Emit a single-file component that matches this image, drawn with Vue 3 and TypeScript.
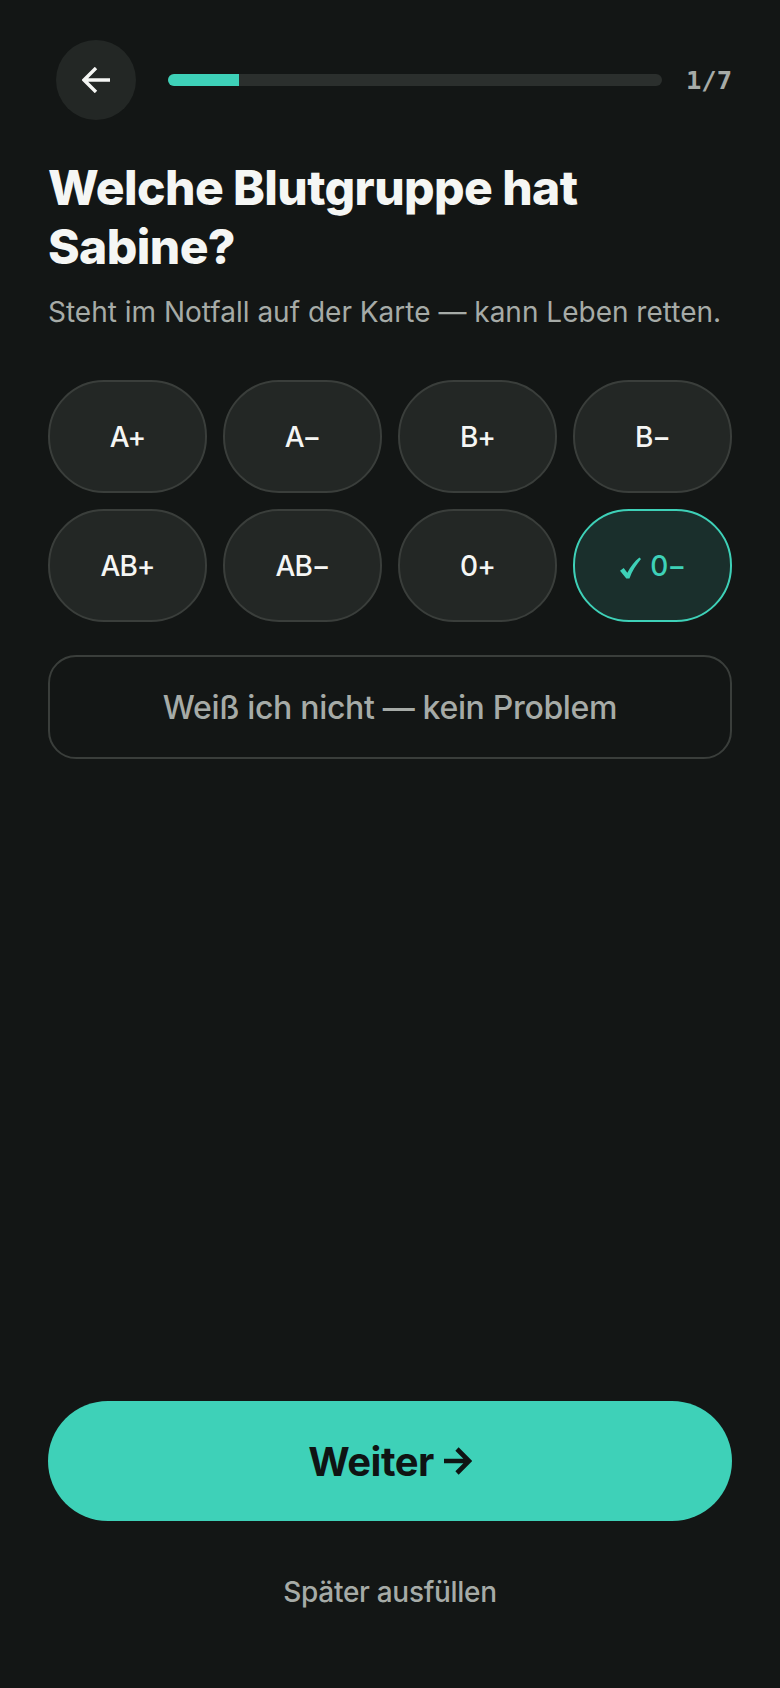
<script setup lang="ts">
import { ref } from "vue";

const groups = ["A+", "A−", "B+", "B−", "AB+", "AB−", "0+", "0−"];
const selected = ref("0−");
const step = 1;
const total = 7;
</script>

<template>
  <main class="screen">
    <header class="top">
      <button class="back" type="button" aria-label="Zurück">
        <svg width="28" height="26" viewBox="0 0 28 26" fill="none">
          <path d="M28 13H2M14 1 2 13l12 12" stroke="#f5f6f4" stroke-width="3.4" />
        </svg>
      </button>
      <div class="track">
        <div class="fill" :style="{ width: `${(step / total) * 100}%` }"></div>
      </div>
      <span class="count">{{ step }}/{{ total }}</span>
    </header>

    <h1>Welche Blutgruppe hat<br />Sabine?</h1>
    <p class="hint">Steht im Notfall auf der Karte — kann Leben retten.</p>

    <div class="grid">
      <button
        v-for="g in groups"
        :key="g"
        type="button"
        class="chip"
        :class="{ active: g === selected }"
        @click="selected = g"
      >
        <svg v-if="g === selected" class="tick" width="21" height="22" viewBox="0 0 20 20">
          <path d="M0 12.5 3.5 10 7 14.5C10 8.5 14 3.5 18.5 0L20 1.5C15.5 7 11.5 13 9 20H6Z" fill="#3ed1b8" />
        </svg>
        {{ g }}
      </button>
    </div>

    <button class="unknown" type="button">Weiß ich nicht — kein Problem</button>

    <div class="spacer"></div>

    <button class="next" type="button">
      Weiter
      <svg width="28" height="28" viewBox="0 0 28 28" fill="none">
        <path d="M0 14h25M13 2l12 12-12 12" stroke="#0f1413" stroke-width="4.6" />
      </svg>
    </button>
    <button class="later" type="button">Später ausfüllen</button>
  </main>
</template>

<style>
html,
body {
  background: #131615;
}
</style>

<style scoped>
.screen {
  box-sizing: border-box;
  height: 1688px;
  padding: 40px 48px 0;
  display: flex;
  flex-direction: column;
  background: #131615;
  font-family: Inter, "Liberation Sans", sans-serif;
  color: #f5f6f4;
}

button {
  font-family: inherit;
  cursor: pointer;
}

.top {
  display: flex;
  align-items: center;
  padding-left: 8px;
}

.back {
  width: 80px;
  height: 80px;
  flex: none;
  padding: 0;
  border: 0;
  border-radius: 50%;
  background: #232725;
  display: flex;
  align-items: center;
  justify-content: center;
}

.track {
  flex: 1;
  height: 12px;
  margin: 0 24px 0 32px;
  border-radius: 6px;
  background: #2b2f2d;
  overflow: hidden;
}

.fill {
  height: 100%;
  background: #3ed1b8;
}

.count {
  font-family: "DejaVu Sans Mono", monospace;
  font-size: 25.5px;
  font-weight: 700;
  color: #a6aba7;
}

h1 {
  margin: 38px 0 0;
  font-size: 48px;
  line-height: 59px;
  font-weight: 800;
  letter-spacing: -0.6px;
}

.hint {
  margin: 16px 0 0;
  font-size: 28px;
  line-height: 40px;
  color: #a6aba7;
}

.grid {
  display: grid;
  grid-template-columns: repeat(4, 1fr);
  gap: 16px;
  margin-top: 48px;
}

.chip {
  height: 113px;
  padding: 0;
  border: 2px solid #3a3e3b;
  border-radius: 56px;
  background: #232725;
  color: #f5f6f4;
  font-size: 28px;
  font-weight: 500;
  letter-spacing: -1px;
}

.chip.active {
  border-color: #3ed1b8;
  background: #1a2f2c;
  color: #3ed1b8;
}

.tick {
  margin-right: 3px;
  vertical-align: -3px;
}

.unknown {
  margin-top: 33px;
  height: 104px;
  border: 2px solid #3a3e3b;
  border-radius: 28px;
  background: transparent;
  color: #a6aba7;
  font-size: 32px;
  font-weight: 500;
  letter-spacing: -0.33px;
}

.spacer {
  flex: 1;
}

.next {
  height: 120px;
  border: 0;
  border-radius: 60px;
  background: #3ed1b8;
  color: #0f1413;
  font-size: 40px;
  font-weight: 700;
  letter-spacing: -0.5px;
  display: flex;
  align-items: center;
  justify-content: center;
  gap: 10px;
}

.later {
  margin: 51px 0 76px;
  padding: 0;
  border: 0;
  background: none;
  color: #a6aba7;
  font-size: 28px;
  line-height: 40px;
  font-weight: 500;
  letter-spacing: -0.3px;
}
</style>
